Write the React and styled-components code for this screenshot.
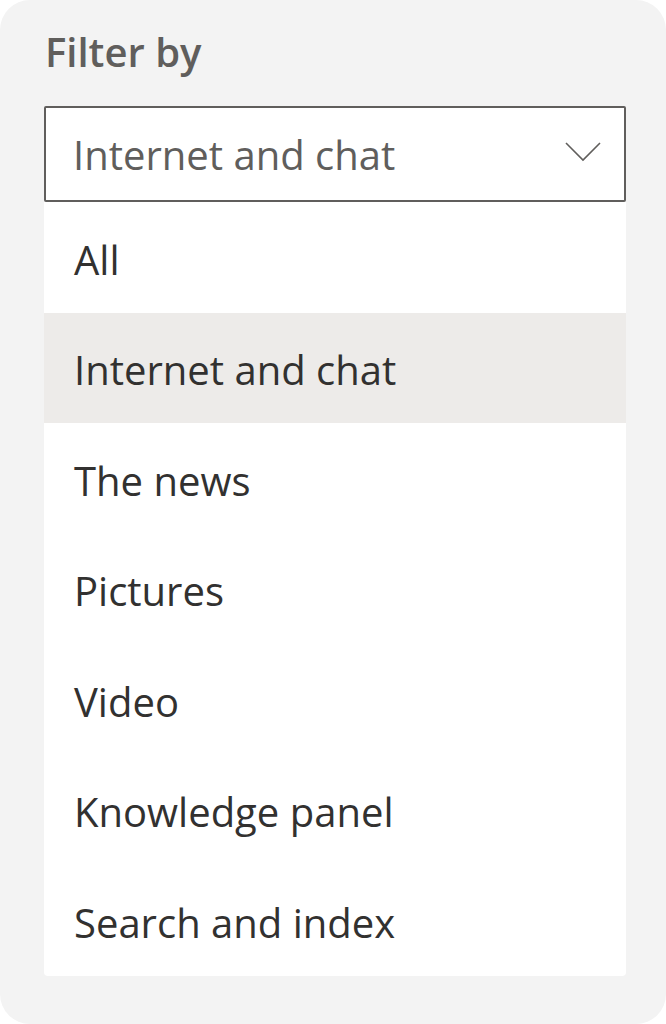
import React from 'react';
import styled, { createGlobalStyle } from 'styled-components';

const GlobalStyle = createGlobalStyle`
  html, body {
    margin: 0;
    padding: 0;
    background: #ffffff;
  }
  * {
    box-sizing: border-box;
  }
`;

const Panel = styled.div`
  width: 666px;
  height: 1024px;
  background-color: #f3f3f3;
  border-radius: 30px;
  padding: 25px 40px 0 44px;
  font-family: 'Open Sans', 'Noto Sans', sans-serif;
`;

const Title = styled.div`
  font-size: 40px;
  font-weight: 600;
  color: #605e5c;
  height: 81px;
  line-height: 54px;
  padding-left: 1px;
`;

const Select = styled.div`
  display: flex;
  align-items: center;
  justify-content: space-between;
  height: 96px;
  background-color: #ffffff;
  border: 2px solid #605e5c;
  border-radius: 2px;
  padding: 0 23px 0 27px;
  color: #605e5c;
  font-size: 40px;
`;

const Chevron = styled.svg`
  width: 36px;
  height: 20px;
  margin-top: -4px;
`;

const List = styled.div`
  background-color: #ffffff;
  border-radius: 0 0 4px 4px;
  display: flex;
  flex-direction: column;
`;

const Item = styled.div`
  height: 110.5px;
  display: flex;
  align-items: center;
  padding: 4px 0 0 30px;
  font-size: 40px;
  color: #323130;
  background-color: ${p => (p.$active ? '#edebe9' : 'transparent')};
`;

const options = [
  'All',
  'Internet and chat',
  'The news',
  'Pictures',
  'Video',
  'Knowledge panel',
  'Search and index',
];

export default function App() {
  const selected = 'Internet and chat';
  return (
    <>
      <GlobalStyle />
      <Panel>
        <Title>Filter by</Title>
        <Select>
          <span>{selected}</span>
          <Chevron viewBox="0 0 36 20">
            <path d="M1 1 L18 18 L35 1" fill="none" stroke="#605e5c" strokeWidth="1.6" />
          </Chevron>
        </Select>
        <List>
          {options.map(o => (
            <Item key={o} $active={o === selected}>{o}</Item>
          ))}
        </List>
      </Panel>
    </>
  );
}
